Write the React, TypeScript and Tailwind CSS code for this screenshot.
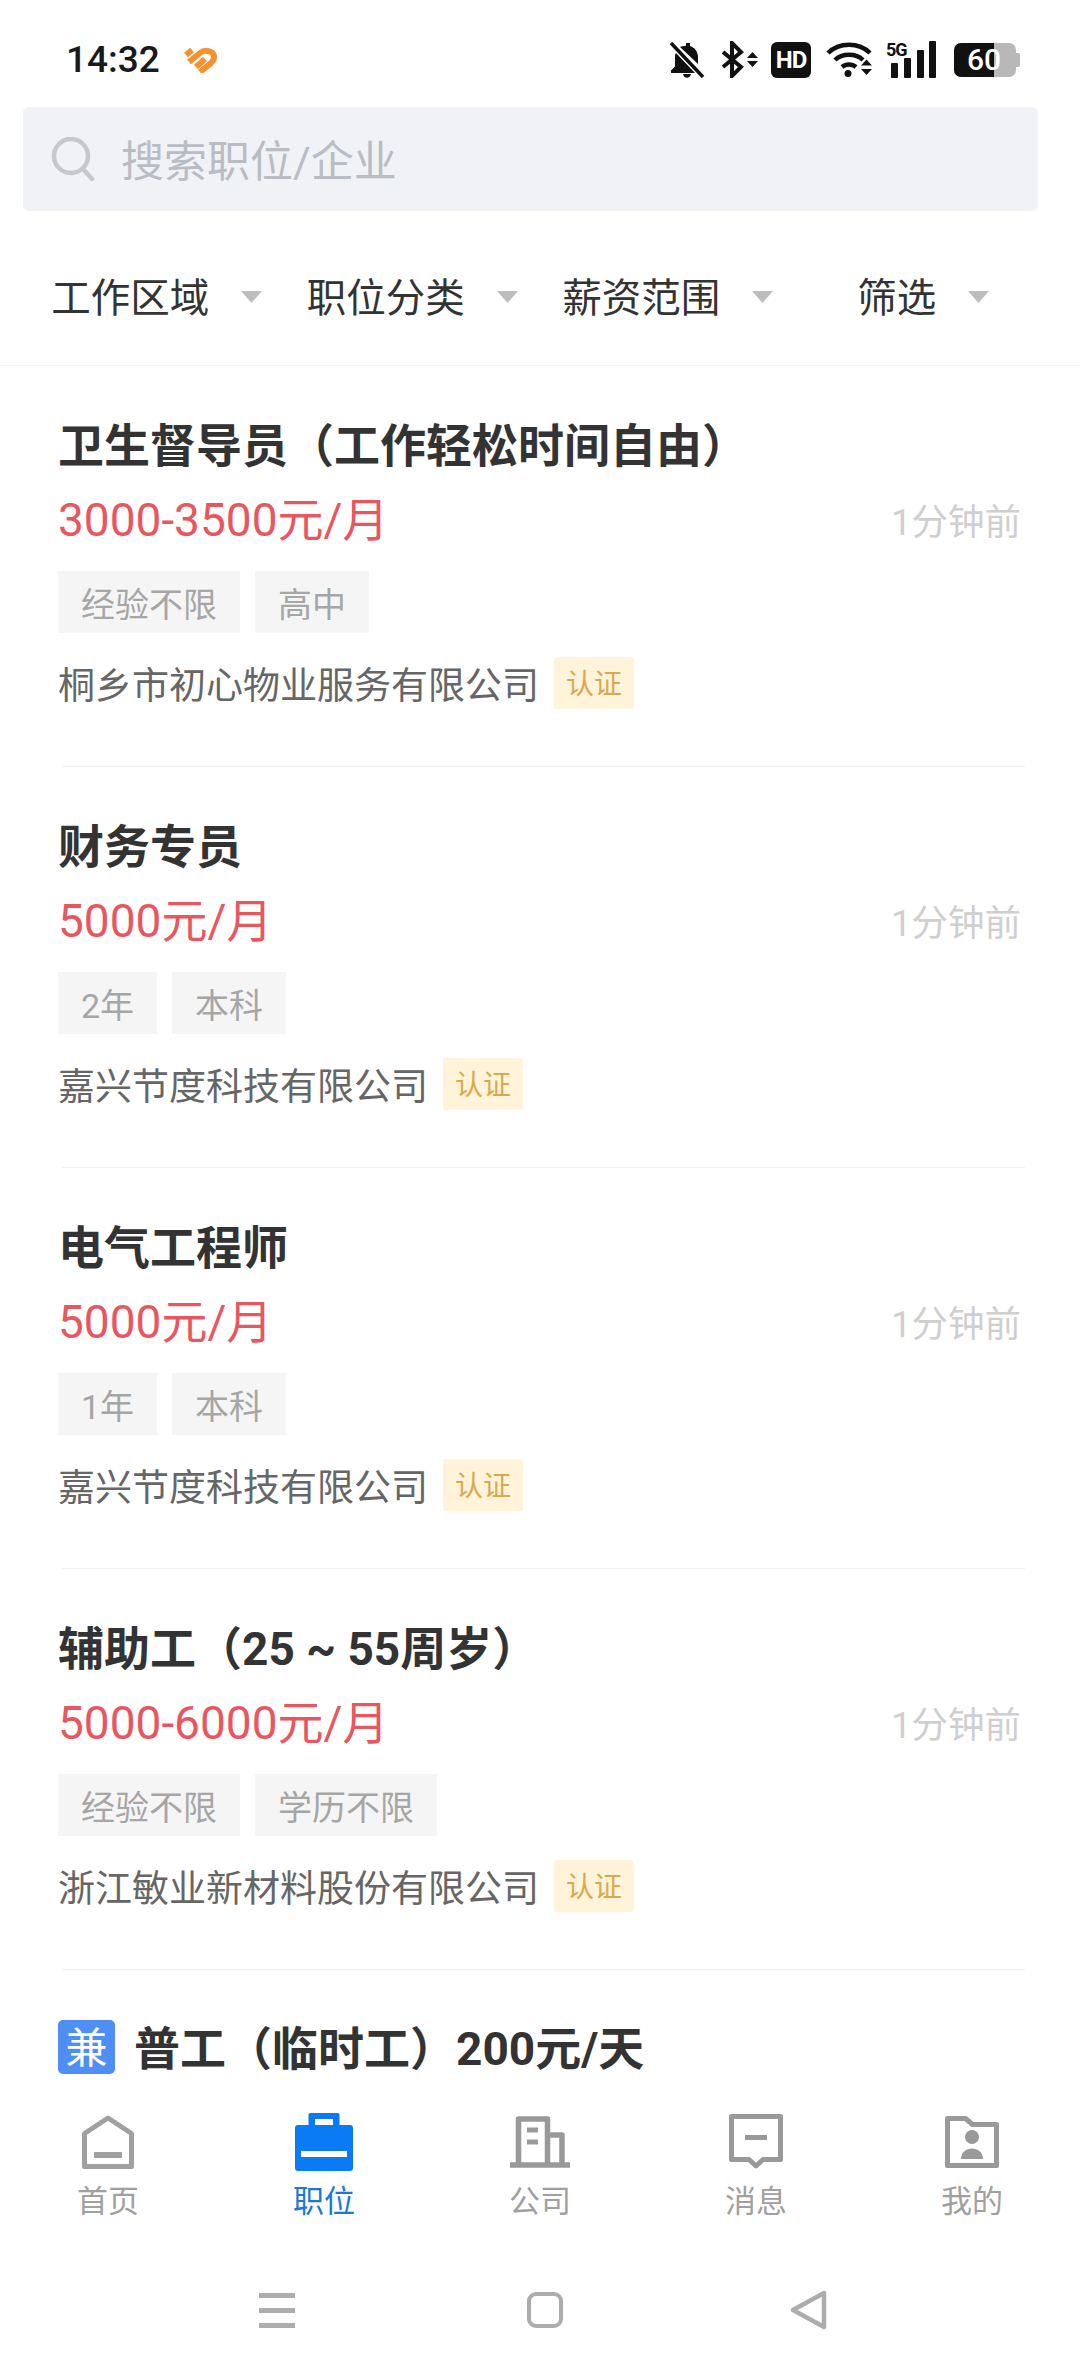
import { ReactNode } from 'react';

const jobs = [
  { title: '卫生督导员（工作轻松时间自由）', salary: '3000-3500元/月', tags: ['经验不限', '高中'], company: '桐乡市初心物业服务有限公司' },
  { title: '财务专员', salary: '5000元/月', tags: ['2年', '本科'], company: '嘉兴节度科技有限公司' },
  { title: '电气工程师', salary: '5000元/月', tags: ['1年', '本科'], company: '嘉兴节度科技有限公司' },
  { title: '辅助工（25 ~ 55周岁）', salary: '5000-6000元/月', tags: ['经验不限', '学历不限'], company: '浙江敏业新材料股份有限公司' },
];

const filters = ['工作区域', '职位分类', '薪资范围', '筛选'];

function UpDown() {
  return (
    <svg width="11" height="15" viewBox="0 0 11 15" fill="#111">
      <path d="M5.500 0 11 6H0zM0 9h11l-5.500 6z" />
    </svg>
  );
}

function StatusIcons() {
  return (
    <div className="flex items-center h-[37px]">
      {/* muted bell */}
      <svg width="36" height="37" viewBox="0 0 36 37" fill="#111">
        <path d="M17 2h4v3c5 1.500 8 6 8 11v7L11 6c1.500-.6 3.500-1 6-1.200zM7 12l19 20H2v-2.500l4-4V15c0-1 .3-2 1-3zM14 33h8c-.5 2.500-2 3.800-4 3.800S14.500 35.500 14 33z" />
        <path d="M2 2l32 34" stroke="#111" strokeWidth="3.500" fill="none" />
      </svg>
      {/* bluetooth */}
      <div className="flex items-center ml-[16px] w-[37px] gap-[3px]">
        <svg width="23" height="37" viewBox="0 0 23 37" fill="none" stroke="#111" strokeWidth="4">
          <path d="M2 11l18 15-9 9V2l9 9-18 15" />
        </svg>
        <UpDown />
      </div>
      {/* HD */}
      <div className="ml-[13px] w-[40px] h-[36px] rounded-[6px] bg-[#111] text-white flex items-center justify-center text-[24px] font-bold tracking-[-1px]">
        HD
      </div>
      {/* wifi */}
      <svg className="ml-[15px]" width="46" height="37" viewBox="0 0 46 37" fill="none" stroke="#111" strokeWidth="4.500">
        <path d="M2 12c11-11 31-11 42 0M9 19c7-7 21-7 28 0M16 26c4-3.500 10-3.500 14 0" />
        <circle cx="22" cy="32.500" r="3.500" fill="#111" stroke="none" />
        <path d="M35 24.500h11l-5.500-6zM35 28h11l-5.500 6z" fill="#111" stroke="none" />
      </svg>
      {/* 5G signal */}
      <div className="relative ml-[14px] w-[50px] h-[37px]">
        <span className="absolute left-0 top-0 text-[18px] leading-none font-bold tracking-[-1px] text-[#111]">5G</span>
        <svg width="50" height="37" viewBox="0 0 50 37" fill="#111">
          <rect x="5" y="22" width="7" height="15" rx="1" />
          <rect x="18" y="17" width="7" height="20" rx="1" />
          <rect x="31" y="9" width="7" height="28" rx="1" />
          <rect x="43" y="0" width="7" height="37" rx="1" />
        </svg>
      </div>
      {/* battery */}
      <div className="ml-[18px] flex items-center">
        <div className="relative w-[62px] h-[34px] rounded-[7px] bg-[#b8b8b8] overflow-hidden">
          <div className="w-[40px] h-full bg-[#111]" />
          <span className="absolute inset-0 pl-[13px] flex items-center text-white text-[30px] leading-none font-medium">60</span>
        </div>
        <div className="w-[4px] h-[14px] rounded-r-[2px] bg-[#b8b8b8]" />
      </div>
    </div>
  );
}

function StatusBar() {
  return (
    <div className="h-[107px] pt-[41px] pl-[66px] pr-[60px] flex items-start justify-between">
      <div className="flex items-center h-[37px]">
        <span className="w-[92px] text-[37px] leading-none font-medium text-[#1a1a1a]">14:32</span>
        <svg className="ml-[25px]" width="34" height="27" viewBox="0 0 34 27" fill="none" stroke="#f6922e" strokeWidth="6">
          <path d="M3 9l6-5" />
          <path d="M6 16 17 7c5-4 13-2 14 3 .5 3-1 5-3 7L17 26" />
          <path d="M13 21l9-8" />
        </svg>
      </div>
      <StatusIcons />
    </div>
  );
}

function SearchBox() {
  return (
    <div className="ml-[23px] mr-[42px] h-[104px] rounded-[6px] bg-[#f0f2f5] flex items-center pl-[28px]">
      <svg width="44" height="44" viewBox="0 0 44 44" fill="none" stroke="#c6c8cb" strokeWidth="4.500">
        <circle cx="20" cy="19" r="17" />
        <path d="M32 32l9 10" strokeLinecap="round" />
      </svg>
      <span className="ml-[26px] pt-[6px] text-[43px] leading-none text-[#b9bdc3]">搜索职位/企业</span>
    </div>
  );
}

function FilterBar() {
  return (
    <div className="h-[155px] px-[29px] grid grid-cols-4 items-center border-b border-[#f3f3f3] pt-[15px]">
      {filters.map((f) => (
        <div key={f} className="flex items-center justify-center">
          <span className="pt-[6px] text-[39.500px] leading-none text-[#333]">{f}</span>
          <svg className="ml-[32px] mt-[2px]" width="21" height="12" viewBox="0 0 21 12" fill="#bdbdbd">
            <path d="M0 0h21L10.500 12z" />
          </svg>
        </div>
      ))}
    </div>
  );
}

function JobCard({ title, salary, tags, company }: (typeof jobs)[number]) {
  return (
    <article>
      <div className="h-[400px] pl-[58px] pr-[59px] pt-[49px]">
        <h2 className="h-[60px] text-[46px] leading-[62px] font-bold text-[#333]">{title}</h2>
        <div className="mt-[15px] h-[60px] flex items-center justify-between">
          <span className="text-[46px] leading-none text-[#e8565f]">{salary}</span>
          <span className="pt-[6px] text-[36.500px] leading-none text-[#cfcfcf]">1分钟前</span>
        </div>
        <div className="mt-[21px] flex gap-[15px]">
          {tags.map((t) => (
            <span key={t} className="h-[62px] px-[23px] pt-[5px] flex items-center bg-[#f5f5f5] text-[34px] leading-none text-[#a6a6a6]">
              {t}
            </span>
          ))}
        </div>
        <div className="mt-[24px] flex items-center h-[52px]">
          <span className="pt-[6px] text-[37px] leading-none text-[#666]">{company}</span>
          <span className="ml-[15px] w-[80px] h-[52px] rounded-[3px] bg-[#fff3d9] pt-[3px] flex items-center justify-center text-[28px] leading-none text-[#d9a94f]">
            认证
          </span>
        </div>
      </div>
      <div className="ml-[62px] mr-[55px] h-px bg-[#f2f2f2]" />
    </article>
  );
}

function PartTimeRow() {
  return (
    <div className="px-[58px] pt-[50px] flex items-center">
      <span className="w-[57px] h-[54px] rounded-[5px] bg-[#4f8ef5] pt-[4px] flex items-center justify-center text-[42px] leading-none text-white">
        兼
      </span>
      <span className="ml-[19px] pt-[4px] text-[46px] leading-none font-bold text-[#333]">普工（临时工）200元/天</span>
    </div>
  );
}

const tabs: { label: string; active?: boolean; icon: ReactNode }[] = [
  {
    label: '首页',
    icon: (
      <svg width="52" height="54" viewBox="0 0 52 54" fill="none" stroke="#a0a0a0" strokeWidth="5" strokeLinejoin="round">
        <path d="M2.500 18.500 26 3l23.500 15.500v33h-47z" />
        <path d="M12 40h28" strokeWidth="6" />
      </svg>
    ),
  },
  {
    label: '职位',
    active: true,
    icon: (
      <svg width="58" height="58" viewBox="0 0 58 58">
        <path
          fillRule="evenodd"
          fill="#0a7bf5"
          d="M15 0h28a1.500 1.500 0 0 1 1.500 1.500V12H55a3 3 0 0 1 3 3v40a3 3 0 0 1-3 3H3a3 3 0 0 1-3-3V15a3 3 0 0 1 3-3h10.500V1.500A1.500 1.500 0 0 1 15 0zM20 6v6h18V6z"
        />
        <rect x="6" y="38" width="46" height="6" fill="#fff" />
      </svg>
    ),
  },
  {
    label: '公司',
    icon: (
      <svg width="60" height="52" viewBox="0 0 60 52" fill="none" stroke="#999" strokeWidth="5.500">
        <path d="M8.500 49V3h29v46M37 19h15v30" strokeLinejoin="round" />
        <path d="M0 49h60" />
        <path d="M17 14h11M17 26h11" strokeWidth="5" />
      </svg>
    ),
  },
  {
    label: '消息',
    icon: (
      <svg width="54" height="56" viewBox="0 0 54 56" fill="none" stroke="#999" strokeWidth="5" strokeLinejoin="round">
        <path d="M2.500 2.500h49v43H34L27 52l-7-6.500H2.500z" />
        <path d="M16 23.500h22" />
      </svg>
    ),
  },
  {
    label: '我的',
    icon: (
      <svg width="54" height="52" viewBox="0 0 54 52">
        <path d="M2.500 2.500h18l7 6h24v41h-49z" fill="none" stroke="#999" strokeWidth="5" strokeLinejoin="round" />
        <circle cx="27" cy="21" r="7" fill="#999" />
        <path d="M16 43c0-14 22-14 22 0z" fill="#999" />
      </svg>
    ),
  },
];

function BottomNav() {
  return (
    <div className="shrink-0 h-[286px] bg-white">
      <nav className="h-[143px] grid grid-cols-5 pt-[21px]">
        {tabs.map((t) => (
          <div key={t.label} className="flex flex-col items-center">
            <div className="h-[62px] flex items-center justify-center">{t.icon}</div>
            <span className={`mt-[10px] pt-[3px] text-[31px] leading-none ${t.active ? 'text-[#1a78d8]' : 'text-[#a0a0a0]'}`}>
              {t.label}
            </span>
          </div>
        ))}
      </nav>
      {/* android nav keys */}
      <div className="mt-[57px] flex items-center h-[40px] pl-[259px]">
        <div className="w-[36px] flex flex-col gap-[10px]">
          <div className="h-[5px] bg-[#adadad]" />
          <div className="h-[5px] bg-[#adadad]" />
          <div className="h-[5px] bg-[#adadad]" />
        </div>
        <div className="ml-[232px] w-[36px] h-[36px] rounded-[9px] border-[4px] border-[#adadad]" />
        <svg className="ml-[227px]" width="37" height="40" viewBox="0 0 37 40" fill="none" stroke="#adadad" strokeWidth="4.500" strokeLinejoin="round">
          <path d="M34 3v34L3 20z" />
        </svg>
      </div>
    </div>
  );
}

export default function App() {
  return (
    <div
      className="w-[1080px] h-[2376px] bg-white flex flex-col overflow-hidden"
      style={{ fontFamily: 'Roboto, "Noto Sans CJK SC", sans-serif' }}
    >
      <StatusBar />
      <SearchBox />
      <FilterBar />
      <main className="flex-1 min-h-0 overflow-hidden">
        {jobs.map((job) => (
          <JobCard key={job.title} {...job} />
        ))}
        <PartTimeRow />
      </main>
      <BottomNav />
    </div>
  );
}
